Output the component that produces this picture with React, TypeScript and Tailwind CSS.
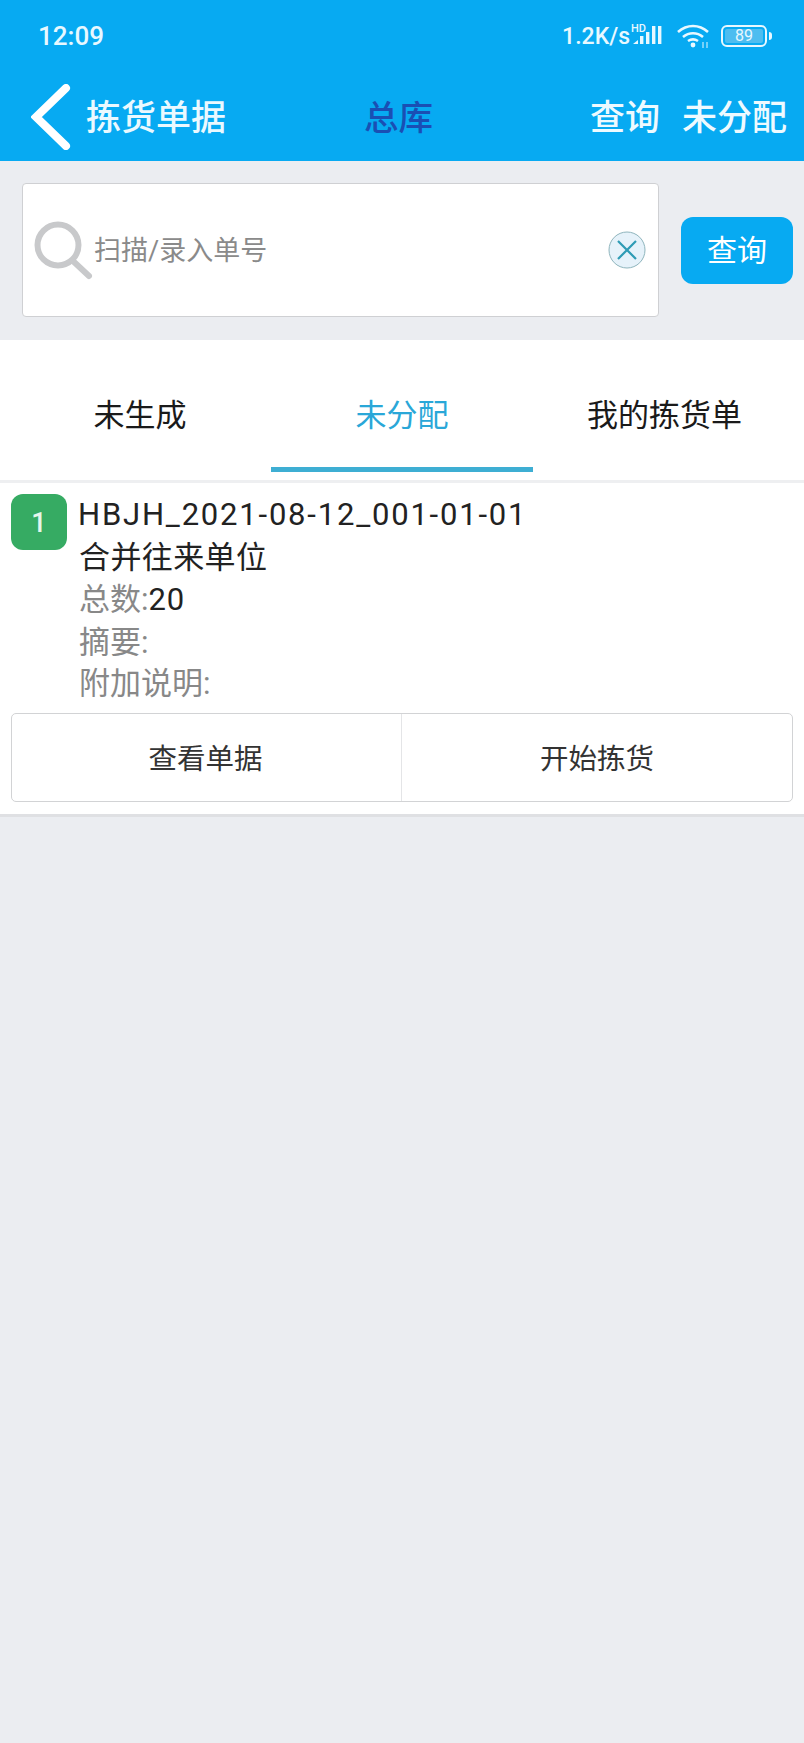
const cjk = 'font-["Roboto","Noto_Sans_CJK_SC",sans-serif]';

function StatusIcons() {
    return (
        <div className="flex items-center">
            <span className="text-[23px] font-medium leading-none text-[#e8f8ff]">1.2K/s</span>
            <svg width="36" height="26" viewBox="0 0 36 26" className="ml-[1px]" fill="#e8f8ff">
                <text x="0" y="9" fontSize="11" fontWeight="500" fontFamily="Roboto, sans-serif">HD</text>
                <path d="M2 21l5-4v4z" />
                <rect x="9" y="13" width="3.4" height="8" />
                <rect x="15" y="9" width="3.4" height="12" />
                <rect x="21" y="3" width="3.4" height="18" />
                <rect x="27" y="3" width="3.4" height="18" />
            </svg>
            <svg width="36" height="26" viewBox="0 0 36 26" className="ml-[9px]" fill="none" stroke="#e8f8ff" strokeWidth="2.6">
                <path d="M2 9c9-8 21-8 30 0" />
                <path d="M7 14c6-5 14-5 20 0" />
                <path d="M12 18c3-2 7-2 10 0" />
                <circle cx="17" cy="22" r="2.4" fill="#e8f8ff" stroke="none" />
                <path d="M27 19v6M31 19v6" strokeWidth="1" />
            </svg>
            <div className="ml-[9px] flex items-center">
                <div className="flex h-[22px] w-[46px] items-center justify-center rounded-[6px] border-2 border-[#e8f8ff] p-[2px]">
                    <div className="flex h-full w-full items-center justify-center rounded-[2px] bg-[#4dbdf0] text-[16px] leading-none text-[#e8f8ff]">
                        89
                    </div>
                </div>
                <div className="ml-[2px] h-[8px] w-[3px] rounded-r-sm bg-[#e8f8ff]" />
            </div>
        </div>
    );
}

function Header() {
    return (
        <header className="h-[161px] bg-[#07aaf2]">
            <div className="flex h-[72px] items-center justify-between pl-[38px] pr-[32px]">
                <span className="text-[26px] font-medium leading-none text-[#e8f8ff]">12:09</span>
                <StatusIcons />
            </div>
            <div className="relative flex h-[89px] items-center pl-[31px] pr-[17px]">
                <svg width="40" height="66" viewBox="0 0 40 66" fill="none" stroke="#ffffff" strokeWidth="8" strokeLinecap="round">
                    <path d="M35 4L5 33l30 29" />
                </svg>
                <span className="ml-[15px] pt-[3px] text-[35px] font-medium leading-none text-[#eaf9ff]">拣货单据</span>
                <span className="ml-[138px] pt-[3px] text-[34.5px] font-medium leading-none text-[#1a4fb4]">总库</span>
                <div className="ml-auto flex gap-[22px] pt-[3px] text-[35px] font-medium leading-none text-[#eefaff]">
                    <span>查询</span>
                    <span>未分配</span>
                </div>
            </div>
        </header>
    );
}

function SearchBar() {
    return (
        <div className="flex h-[179px] items-center bg-[#ebedf1] pb-[2px] pl-[22px] pr-[11px]">
            <div className="flex h-[134px] w-[637px] items-center rounded-[4px] border-[1.5px] border-[#cfd0d3] bg-white pl-[10px] pr-[12px]">
                <svg width="60" height="60" viewBox="0 0 60 60" fill="none" stroke="#c8c9cb" className="shrink-0">
                    <circle cx="25" cy="25" r="20.5" strokeWidth="6" />
                    <path d="M40 41l16 15" strokeWidth="6" strokeLinecap="round" />
                </svg>
                <span className="ml-[1px] pt-[3px] text-[27px] leading-none text-[#8a8a8a]">扫描/录入单号</span>
                <svg width="38" height="38" viewBox="0 0 38 38" className="ml-auto shrink-0">
                    <circle cx="19" cy="19" r="18" fill="#e6f2fa" stroke="#8fb5bd" strokeWidth="1" />
                    <path d="M10 10l18 18M28 10L10 28" stroke="#2f9cb5" strokeWidth="2.2" />
                </svg>
            </div>
            <button className="ml-[22px] mt-[1px] flex h-[67px] w-[112px] items-center justify-center rounded-[12px] bg-[#07aaf2] pt-[2px] text-[30px] leading-none text-white">
                查询
            </button>
        </div>
    );
}

function Tabs() {
    return (
        <nav className="grid h-[143px] grid-cols-[271px_262px_271px] border-b-[3px] border-[#eeeff1] bg-white">
            <div className="flex items-center justify-center pl-[9px] pt-[10px]">
                <span className="text-[31px] leading-none text-[#1a1a1a]">未生成</span>
            </div>
            <div className="relative flex items-center justify-center pt-[10px]">
                <span className="text-[31px] leading-none text-[#2aa7d8]">未分配</span>
                <div className="absolute inset-x-0 bottom-[8px] h-[5px] bg-[#3eaed3]" />
            </div>
            <div className="flex items-center justify-center pr-[8px] pt-[10px]">
                <span className="text-[31px] leading-none text-[#1a1a1a]">我的拣货单</span>
            </div>
        </nav>
    );
}

function PickCard() {
    return (
        <section className="border-b-[3px] border-[#dfe0e3] bg-white px-[11px] pb-[12px] pt-[11px]">
            <div className="flex">
                <div className="flex h-[56px] w-[56px] shrink-0 items-center justify-center rounded-[12px] bg-[#36ab63] pt-[2px] text-[27px] font-medium leading-none text-[#e6f6ec]">
                    1
                </div>
                <div className="ml-[12px] text-[31px] leading-[42.5px] text-[#222]">
                    <div className="-ml-[1px] tracking-[1.8px]">HBJH_2021-08-12_001-01-01</div>
                    <div className="tracking-[0.4px]">合并往来单位</div>
                    <div>
                        <span className="text-[#888]">总数:</span>
                        <span className="tracking-[0.8px]">20</span>
                    </div>
                    <div className="text-[#888]">摘要:</div>
                    <div className="-mt-[1px] text-[#888]">附加说明:</div>
                </div>
            </div>
            <div className="mt-[7px] grid h-[89px] grid-cols-[390px_1fr] rounded-[5px] border-[1.5px] border-[#d2d3d5] text-[28.5px] leading-none text-[#333]">
                <button className="flex items-center justify-center border-r-[1.5px] border-[#e4e5e7] pr-[2px] pt-[7px]">查看单据</button>
                <button className="flex items-center justify-center pt-[7px]">开始拣货</button>
            </div>
        </section>
    );
}

function App() {
    return (
        <main className={`min-h-[1743px] bg-[#ebedf1] ${cjk}`}>
            <Header />
            <SearchBar />
            <Tabs />
            <PickCard />
        </main>
    );
}

export default App;
